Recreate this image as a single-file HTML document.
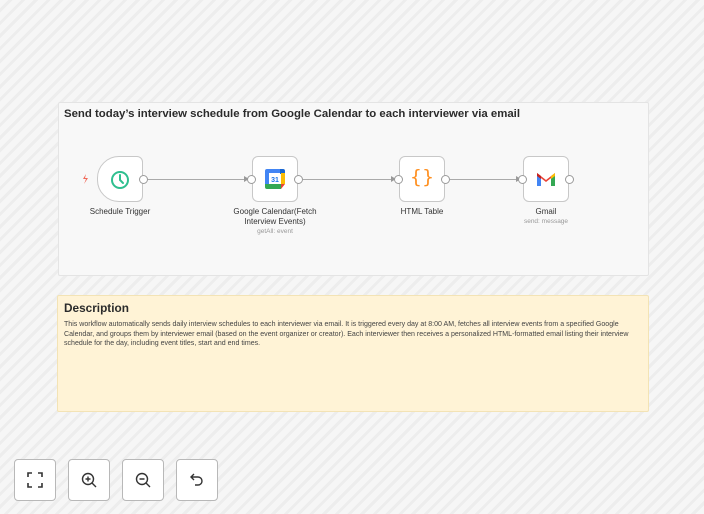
<!DOCTYPE html>
<html><head><style>
*{margin:0;padding:0;box-sizing:border-box}
body{width:704px;height:514px;overflow:hidden;font-family:"Liberation Sans",sans-serif;background:repeating-linear-gradient(135deg,#f6f6f6 0 6px,#ededed 6px 9px);position:relative}
.wf{position:absolute;left:58px;top:102px;width:591px;height:174px;background:#f8f8f8;border:1px solid #e4e4e4;border-radius:2px}
.title{position:absolute;left:64px;top:108px;font-size:11.4px;font-weight:bold;color:#2b2b2b}
.node{position:absolute;top:156px;width:46px;height:46px;background:#fff;border:1px solid #c8c8c8;border-radius:6px}
.dot{position:absolute;width:9px;height:9px;border:1px solid #9a9a9a;border-radius:50%;background:#fff;top:175px}
.lbl{position:absolute;font-size:8px;color:#333;text-align:center;width:120px;line-height:10px}
.sub{position:absolute;font-size:6.5px;color:#999;text-align:center;width:120px}
.line{position:absolute;height:1px;background:#aaa;top:179px}
.desc{position:absolute;left:57px;top:295px;width:592px;height:117px;background:#fff3d6;border:1px solid #f3e3b5;border-radius:2px}
.desc h2{position:absolute;left:6px;top:5px;font-size:11.8px;color:#2b2b2b}
.desc p{position:absolute;left:6px;top:24px;width:576px;font-size:7.05px;line-height:9.5px;color:#444}
.btn{position:absolute;top:459px;width:42px;height:42px;background:#fff;border:1px solid #b8b8b8;border-radius:4px;display:flex;align-items:center;justify-content:center}
</style></head><body>
<div class="wf"></div>
<div class="title">Send today’s interview schedule from Google Calendar to each interviewer via email</div>

<div class="line" style="left:148px;width:100px"></div>
<div class="line" style="left:303px;width:93px"></div>
<div class="line" style="left:450px;width:70px"></div>
<svg style="position:absolute;left:0;top:0" width="704" height="514"><g fill="#999"><path d="M244 176l5 3-5 3z"/><path d="M391 176l5 3-5 3z"/><path d="M516 176l5 3-5 3z"/></g>
<path d="M86 174l-3 5h3l-2 5 4-6h-3z" fill="#f06a5a"/></svg>

<div class="node" style="left:97px;border-radius:22px 6px 6px 22px"></div>
<svg style="position:absolute;left:110px;top:170px" width="20" height="20"><circle cx="10" cy="10" r="8" fill="none" stroke="#2fbf8f" stroke-width="2"/><path d="M10 5v5l3 3" fill="none" stroke="#2fbf8f" stroke-width="2" stroke-linecap="round"/></svg>
<div class="dot" style="left:139px"></div>
<div class="lbl" style="left:60px;top:207px">Schedule Trigger</div>

<div class="node" style="left:252px"></div>
<svg style="position:absolute;left:265px;top:169px" width="20" height="20"><rect x="0" y="0" width="20" height="20" rx="2" fill="#fff"/><path d="M0 2a2 2 0 012-2h13v4H4v11H0z" fill="#4285f4"/><path d="M15 0h3a2 2 0 012 2v3h-5z" fill="#1967d2"/><path d="M16 4h4v11h-4z" fill="#fbbc04"/><path d="M0 15h16v5H2a2 2 0 01-2-2z" fill="#34a853"/><path d="M16 15h4l-4 5z" fill="#ea4335"/><text x="10" y="13" font-size="7" font-weight="bold" fill="#1a73e8" text-anchor="middle" font-family="Liberation Sans">31</text></svg>
<div class="dot" style="left:247px"></div><div class="dot" style="left:294px"></div>
<div class="lbl" style="left:225px;top:207px;width:100px">Google Calendar(Fetch Interview Events)</div>
<div class="sub" style="left:215px;top:228px">getAll: event</div>

<div class="node" style="left:399px"></div>
<div style="position:absolute;left:399px;top:166px;width:46px;text-align:center;font-size:19px;color:#ff8f1f;font-family:'DejaVu Sans',sans-serif">{}</div>
<div class="dot" style="left:394px"></div><div class="dot" style="left:441px"></div>
<div class="lbl" style="left:362px;top:207px">HTML Table</div>

<div class="node" style="left:523px"></div>
<svg style="position:absolute;left:536px;top:171px" width="20" height="16"><path d="M1 4v11h4V7z" fill="#4285f4"/><path d="M19 4v11h-4V7z" fill="#34a853"/><path d="M1 4l9 7 9-7V2l-9 7-9-7z" fill="#ea4335"/><path d="M1 2l4 3v3L1 5z" fill="#c5221f"/><path d="M19 2l-4 3v3l4-3z" fill="#fbbc04"/></svg>
<div class="dot" style="left:518px"></div><div class="dot" style="left:565px"></div>
<div class="lbl" style="left:486px;top:207px">Gmail</div>
<div class="sub" style="left:486px;top:218px">send: message</div>

<div class="desc"><h2>Description</h2><p>This workflow automatically sends daily interview schedules to each interviewer via email. It is triggered every day at 8:00 AM, fetches all interview events from a specified Google Calendar, and groups them by interviewer email (based on the event organizer or creator). Each interviewer then receives a personalized HTML-formatted email listing their interview schedule for the day, including event titles, start and end times.</p></div>

<div class="btn" style="left:14px"><svg width="16" height="16" fill="none" stroke="#333" stroke-width="1.6"><path d="M1 5V1h4M11 1h4v4M15 11v4h-4M5 15H1v-4"/></svg></div>
<div class="btn" style="left:68px"><svg width="16" height="16" fill="none" stroke="#333" stroke-width="1.4"><circle cx="7" cy="7" r="5.5"/><path d="M11 11l4 4M7 4.5v5M4.5 7h5"/></svg></div>
<div class="btn" style="left:122px"><svg width="16" height="16" fill="none" stroke="#333" stroke-width="1.4"><circle cx="7" cy="7" r="5.5"/><path d="M11 11l4 4M4.5 7h5"/></svg></div>
<div class="btn" style="left:176px"><svg width="16" height="16" fill="none" stroke="#333" stroke-width="1.4"><path d="M5 2L2 5l3 3M2 5h7a4 4 0 010 8H6"/></svg></div>
</body></html>
